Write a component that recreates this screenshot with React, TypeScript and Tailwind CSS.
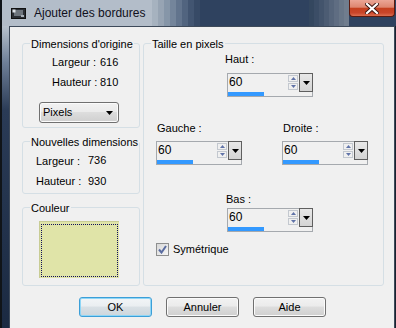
import React from "react";

const btnBg =
  "bg-[linear-gradient(180deg,#f2f2f2_0%,#ebebeb_45%,#dddddd_50%,#cfcfcf_100%)]";

const leftSteps = [
  "bg-[#a6b2bf]",
  "bg-[#97a4b3]",
  "bg-[#8696a8]",
  "bg-[#74859b]",
  "bg-[#62748d]",
  "bg-[#51647f]",
  "bg-[#425571]",
  "bg-[#374a66]",
];

const rightSteps = [
  "bg-[#34475f]",
  "bg-[#3b4d66]",
  "bg-[#43546c]",
  "bg-[#4c5c73]",
  "bg-[#56657b]",
  "bg-[#5f6d82]",
  "bg-[#687688]",
  "bg-[#707d8e]",
];

function Group({
  title,
  className,
  children,
}: {
  title: string;
  className: string;
  children?: React.ReactNode;
}) {
  return (
    <div className={`relative border border-[#d5dfe5] rounded-[3px] ${className}`}>
      <span className="absolute -top-[6px] left-[7px] px-[1px] bg-[#f0f0f0] text-[11px] leading-[13px] text-black whitespace-nowrap">
        {title}
      </span>
      {children}
    </div>
  );
}

function Tri({ up, color, w = 5, h = 3 }: { up?: boolean; color: string; w?: number; h?: number }) {
  return (
    <svg width={w} height={h} viewBox={`0 0 ${w} ${h}`} className="block">
      {up ? (
        <polygon points={`0,${h} ${w / 2},0 ${w},${h}`} fill={color} />
      ) : (
        <polygon points={`0,0 ${w},0 ${w / 2},${h}`} fill={color} />
      )}
    </svg>
  );
}

function NumField({ value }: { value: string }) {
  return (
    <div className="flex w-[86px] h-[24px] border border-[#a5a9ae]">
      <div className="flex flex-col w-[60px]">
        <span className="pl-[1px] pt-[1px] text-[12px] leading-[14px] text-black">{value}</span>
        <div className="mt-auto w-[36px] h-[4px] bg-[#3399ff]" />
      </div>
      <div className="w-[10px] mt-[1px] flex flex-col gap-[1px]">
        <div className="h-[7px] border border-[#c3c8cf] flex items-center justify-center">
          <Tri up color="#6073a8" />
        </div>
        <div className="h-[7px] border border-[#c3c8cf] flex items-center justify-center">
          <Tri color="#6073a8" />
        </div>
      </div>
      <div className="ml-[1px] -mt-[1px] -mr-[1px] w-[14px] h-[19px] border border-[#5f5f5f] bg-[linear-gradient(180deg,#e8e8e8,#d4d4d4)] flex items-center justify-center">
        <Tri color="#000" w={7} h={4} />
      </div>
    </div>
  );
}

function Button({ label, focused }: { label: string; focused?: boolean }) {
  return (
    <div
      className={
        focused
          ? "w-[73px] h-[20px] rounded-[3px] border border-[#3c9fd8] shadow-[inset_0_0_0_1px_#8fd6f6] bg-[linear-gradient(180deg,#f2f5f7_0%,#eaeef1_45%,#d9e0e5_50%,#cdd6dc_100%)] flex items-center justify-center text-[11px] text-black"
          : `w-[73px] h-[20px] rounded-[3px] border border-[#707070] shadow-[inset_0_0_0_1px_#fbfbfb] ${btnBg} flex items-center justify-center text-[11px] text-black`
      }
    >
      {label}
    </div>
  );
}

export default function App() {
  return (
    <div className="w-[396px] h-[328px] overflow-hidden flex flex-col border-l-[2px] border-[#101418] font-['Liberation_Sans',Arial,sans-serif] bg-[#1c2a40]">
      {/* Title bar */}
      <div className="h-[26px] shrink-0 flex bg-[#2f425f]">
        <div className="w-[150px] h-full flex items-center bg-[#b3bdc9]">
          <div className="ml-[9px] w-[15px] h-[13px]">
            <svg width="15" height="13" viewBox="0 0 15 13">
              <rect x="0.5" y="1.5" width="14" height="10" fill="#2a2e34" stroke="#111" />
              <rect x="3" y="3" width="9" height="6" fill="#6d747c" />
              <rect x="1.5" y="2.5" width="3" height="3" fill="#dfe3e8" />
              <rect x="10" y="8" width="3" height="2" fill="#a8b0b8" />
            </svg>
          </div>
          <span className="ml-[6px] px-[2px] whitespace-nowrap text-[12px] leading-[16px] text-[#101020]">
            Ajouter des bordures
          </span>
        </div>
        {leftSteps.map((c) => (
          <div key={c} className={`w-[6px] h-full ${c}`} />
        ))}
        <div className="flex-1 h-full" />
        {rightSteps.map((c) => (
          <div key={c} className={`w-[5px] h-full ${c}`} />
        ))}
        <div className="mr-[1px] w-[46px] h-[17px] rounded-b-[4px] border border-t-0 border-[#5a1a10] bg-[linear-gradient(180deg,#eba696_0%,#de8670_45%,#c5401f_52%,#c9452a_80%,#dc6e50_100%)] flex items-center justify-center">
          <svg width="14" height="11" viewBox="0 0 14 11">
            <path
              d="M2 1 L12 10 M12 1 L2 10"
              stroke="#3a1410"
              strokeWidth="4"
              strokeLinecap="square"
            />
            <path
              d="M2 1 L12 10 M12 1 L2 10"
              stroke="#ffffff"
              strokeWidth="2.2"
              strokeLinecap="square"
            />
          </svg>
        </div>
      </div>

      {/* Body row */}
      <div className="flex flex-1 min-h-0">
        <div className="w-[7px] shrink-0 bg-[linear-gradient(180deg,#b8c2cd_0%,#6f8098_12%,#2a3b56_28%,#1b2a42_100%)]" />
        <div className="flex-1 flex flex-col bg-[#f0f0f0] border-l border-t border-r border-[#3e4a5a] pl-[12px] pt-[16px] text-[11px] leading-[13px] text-black">
          <div className="flex gap-[3px]">
            {/* Left column */}
            <div className="w-[118px] flex flex-col gap-[13px]">
              <Group title="Dimensions d'origine" className="h-[85px] pt-[12px]">
                <div className="flex ml-[29px]">
                  <span className="w-[48px]">Largeur :</span>
                  <span>616</span>
                </div>
                <div className="flex ml-[29px] mt-[7px]">
                  <span className="w-[48px]">Hauteur :</span>
                  <span>810</span>
                </div>
                <div
                  className={`ml-[16px] mt-[13px] w-[80px] h-[21px] rounded-[3px] border border-[#707070] shadow-[inset_0_0_0_1px_#fbfbfb] ${btnBg} flex items-center pl-[3px] pr-[5px]`}
                >
                  <span className="text-[11px]">Pixels</span>
                  <span className="ml-auto">
                    <Tri color="#000" w={7} h={4} />
                  </span>
                </div>
              </Group>
              <Group title="Nouvelles dimensions" className="h-[53px] pt-[13px]">
                <div className="flex ml-[13px]">
                  <span className="w-[52px]">Largeur :</span>
                  <span className="-mt-[1px]">736</span>
                </div>
                <div className="flex ml-[13px] mt-[7px]">
                  <span className="w-[52px]">Hauteur :</span>
                  <span>930</span>
                </div>
              </Group>
              <Group title="Couleur" className="h-[79px] pt-[13px]">
                <div className="ml-[16px] w-[80px] h-[57px] bg-[#e0e4a8] border-l border-t border-[#c8cc94] p-[1px] pt-[2px]">
                  <div className="w-full h-full border border-dotted border-[#10105a]" />
                </div>
              </Group>
            </div>

            {/* Right group */}
            <Group title="Taille en pixels" className="w-[241px] h-[243px] pt-[9px]">
              <div className="ml-[81px]">Haut :</div>
              <div className="ml-[83px] mt-[7px]">
                <NumField value="60" />
              </div>
              <div className="flex mt-[25px]">
                <div className="flex flex-col w-[126px]">
                  <span className="ml-[13px]">Gauche :</span>
                  <div className="ml-[12px] mt-[6px]">
                    <NumField value="60" />
                  </div>
                </div>
                <div className="flex flex-col">
                  <span className="ml-[13px]">Droite :</span>
                  <div className="ml-[12px] mt-[6px]">
                    <NumField value="60" />
                  </div>
                </div>
              </div>
              <div className="ml-[82px] mt-[28px]">Bas :</div>
              <div className="ml-[83px] mt-[2px]">
                <NumField value="60" />
              </div>
              <div className="flex items-center ml-[12px] mt-[11px]">
                <div className="w-[13px] h-[13px] border border-[#8e8f8f] bg-[linear-gradient(135deg,#d8d8d8,#f6f6f6)] flex items-center justify-center">
                  <svg width="9" height="9" viewBox="0 0 9 9">
                    <path d="M1 4.5 L3.5 7.5 L8 1" fill="none" stroke="#5a6ca0" strokeWidth="2" />
                  </svg>
                </div>
                <span className="ml-[4px]">Symétrique</span>
              </div>
            </Group>
          </div>

          {/* Buttons */}
          <div className="flex gap-[14px] ml-[57px] mt-[11px]">
            <Button label="OK" focused />
            <Button label="Annuler" />
            <Button label="Aide" />
          </div>
        </div>
        <div className="w-[1px] shrink-0 bg-[#1a2230]" />
      </div>
    </div>
  );
}
